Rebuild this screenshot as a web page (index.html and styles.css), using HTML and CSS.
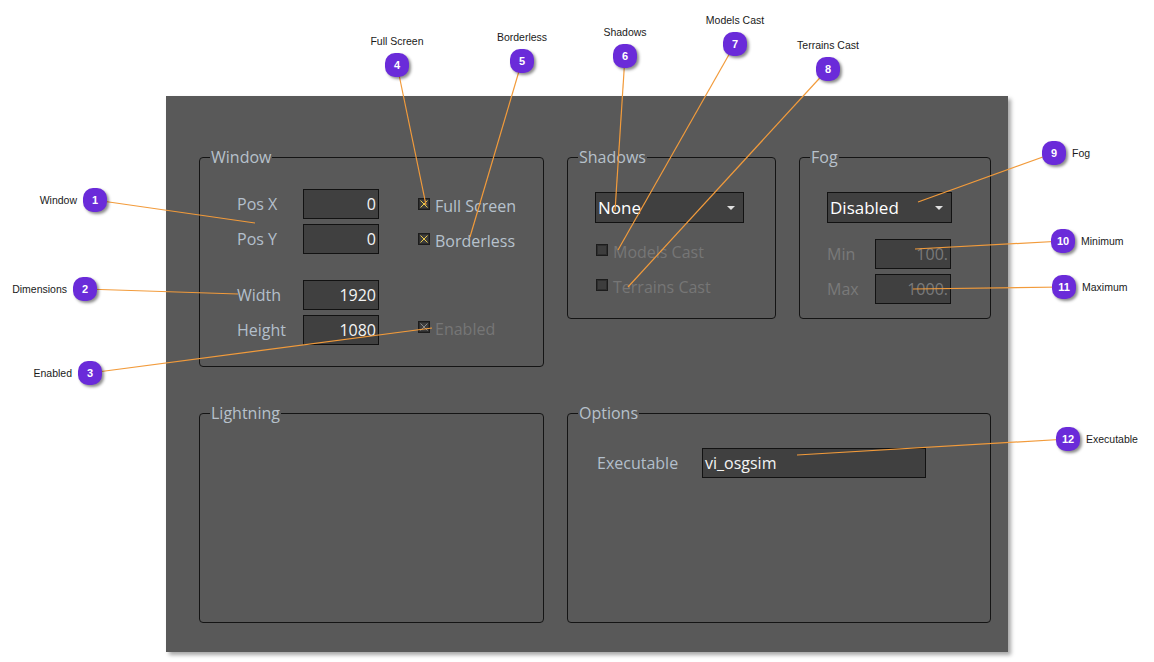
FILE: index.html
```html
<!DOCTYPE html>
<html>
<head>
<meta charset="utf-8">
<link rel="stylesheet" href="styles.css">
</head>
<body>
<div class="page">
  <div class="panel">
    <fieldset class="group g-window">
      <legend>Window</legend>
      <div class="group-body">
        <div class="form-block">
          <span class="lbl">Pos X</span><span class="field num">0</span>
          <label class="check"><span class="cb on"><svg viewBox="0 0 10 10"><path d="M1.5 1.5L8.5 8.5M8.5 1.5L1.5 8.5"/></svg></span>Full Screen</label>
          <span class="lbl">Pos Y</span><span class="field num">0</span>
          <label class="check"><span class="cb on"><svg viewBox="0 0 10 10"><path d="M1.5 1.5L8.5 8.5M8.5 1.5L1.5 8.5"/></svg></span>Borderless</label>
        </div>
        <div class="form-block second">
          <span class="lbl">Width</span><span class="field num">1920</span><span></span>
          <span class="lbl">Height</span><span class="field num">1080</span>
          <label class="check disabled raised"><span class="cb dis"><svg viewBox="0 0 10 10"><path d="M1.5 1.5L8.5 8.5M8.5 1.5L1.5 8.5"/></svg></span>Enabled</label>
        </div>
      </div>
    </fieldset>

    <fieldset class="group g-shadows">
      <legend>Shadows</legend>
      <div class="group-body">
        <div class="combo w-shadows"><span>None</span><i class="arrow"></i></div>
        <div class="checks">
          <label class="check disabled"><span class="cb"></span>Models Cast</label>
          <label class="check disabled"><span class="cb"></span>Terrains Cast</label>
        </div>
      </div>
    </fieldset>

    <fieldset class="group g-fog">
      <legend>Fog</legend>
      <div class="group-body">
        <div class="combo w-fog"><span>Disabled</span><i class="arrow"></i></div>
        <div class="fog-form">
          <span class="lbl disabled">Min</span><span class="field num disabled">100.</span>
          <span class="lbl disabled">Max</span><span class="field num disabled">1000.</span>
        </div>
      </div>
    </fieldset>

    <fieldset class="group g-light">
      <legend>Lightning</legend>
    </fieldset>

    <fieldset class="group g-options">
      <legend>Options</legend>
      <div class="group-body">
        <div class="opt-form">
          <span class="lbl">Executable</span><span class="field text">vi_osgsim</span>
        </div>
      </div>
    </fieldset>
  </div>

  <svg class="leaders" width="1154" height="662" viewBox="0 0 1154 662">
    <line x1="95" y1="200" x2="255" y2="223"/>
    <line x1="85" y1="289" x2="238" y2="294"/>
    <line x1="90" y1="373" x2="432" y2="328"/>
    <line x1="397" y1="65" x2="426" y2="205"/>
    <line x1="522" y1="61" x2="470" y2="237"/>
    <line x1="625" y1="56" x2="615" y2="211"/>
    <line x1="735" y1="44" x2="618" y2="250"/>
    <line x1="828" y1="69" x2="628" y2="287"/>
    <line x1="1054" y1="153" x2="918" y2="202"/>
    <line x1="1063" y1="241" x2="915" y2="249"/>
    <line x1="1064" y1="287" x2="913" y2="289"/>
    <line x1="1068" y1="439" x2="797" y2="455"/>
  </svg>

  <div class="ann left a1"><span class="ann-text">Window</span><span class="badge">1</span></div>
  <div class="ann left a2"><span class="ann-text">Dimensions</span><span class="badge">2</span></div>
  <div class="ann left a3"><span class="ann-text">Enabled</span><span class="badge">3</span></div>

  <div class="ann top a4"><span class="ann-text">Full Screen</span><span class="badge">4</span></div>
  <div class="ann top a5"><span class="ann-text">Borderless</span><span class="badge">5</span></div>
  <div class="ann top a6"><span class="ann-text">Shadows</span><span class="badge">6</span></div>
  <div class="ann top a7"><span class="ann-text">Models Cast</span><span class="badge">7</span></div>
  <div class="ann top a8"><span class="ann-text">Terrains Cast</span><span class="badge">8</span></div>

  <div class="ann right a9"><span class="badge">9</span><span class="ann-text">Fog</span></div>
  <div class="ann right a10"><span class="badge">10</span><span class="ann-text">Minimum</span></div>
  <div class="ann right a11"><span class="badge">11</span><span class="ann-text">Maximum</span></div>
  <div class="ann right a12"><span class="badge">12</span><span class="ann-text">Executable</span></div>
</div>
</body>
</html>
```
FILE: styles.css
```css
html, body {
  margin: 0;
  padding: 0;
  background: #ffffff;
}

.page {
  position: relative;
  width: 1154px;
  height: 662px;
  overflow: hidden;
  box-sizing: border-box;
  padding: 96px 0 0 166px;
  font-family: "Open Sans", "Noto Sans", sans-serif;
}

.panel {
  width: 842px;
  height: 556px;
  box-sizing: border-box;
  background: #595959;
  box-shadow: 3px 3px 4px rgba(0, 0, 0, 0.35);
  padding: 53px 0 0 33px;
  display: grid;
  grid-template-columns: 345px 209px 192px;
  grid-template-rows: 218px 218px;
  column-gap: 23px;
  row-gap: 38px;
}

.group {
  margin: 0;
  padding: 0;
  min-width: 0;
  border: 1px solid #141414;
  border-radius: 4px;
  box-sizing: border-box;
  color: #b3bfcb;
  font-size: 16px;
}

.group legend {
  margin-left: 10px;
  padding: 0 1px;
  line-height: 16px;
  height: 16px;
  color: #b7c1cb;
  font-size: 16px;
}

.g-window { grid-column: 1; grid-row: 1; }
.g-shadows { grid-column: 2; grid-row: 1; align-self: start; height: 170px; }
.g-fog { grid-column: 3; grid-row: 1; align-self: start; height: 170px; }
.g-light { grid-column: 1; grid-row: 2; }
.g-options { grid-column: 2 / span 2; grid-row: 2; }

.g-window .group-body { padding: 24px 0 0 37px; }
.g-shadows .group-body { padding: 27px 0 0 27px; }
.g-fog .group-body { padding: 27px 0 0 27px; }
.g-options .group-body { padding: 27px 0 0 29px; }

.lbl {
  display: flex;
  align-items: center;
  height: 30px;
  color: #b3bfcb;
  line-height: 20px;
}

.field {
  display: flex;
  align-items: center;
  height: 30px;
  box-sizing: border-box;
  background: #404040;
  border: 1px solid #121212;
  color: #f4f4f4;
  line-height: 20px;
}

.field.num {
  justify-content: flex-end;
  padding-right: 2px;
}

.field.text {
  padding-left: 2px;
}

.disabled,
.lbl.disabled,
.field.disabled {
  color: #7a7a7a;
}

.form-block {
  display: grid;
  grid-template-columns: 66px 76px auto;
  grid-auto-rows: 30px;
  row-gap: 5px;
}

.form-block.second {
  margin-top: 26px;
}

.check {
  display: flex;
  align-items: center;
  padding-left: 39px;
  gap: 5px;
  color: #b7c2cd;
  line-height: 20px;
  padding-top: 3px;
  box-sizing: border-box;
}

.check.raised {
  padding-top: 0;
  margin-top: -3px;
}

.check.disabled {
  color: #767676;
}

.cb {
  width: 12px;
  height: 12px;
  box-sizing: border-box;
  border: 1px solid #1c1c1c;
  background: #3d3d3d;
  box-shadow: inset 0 0 0 1px #2e2e2e;
  display: flex;
  align-items: center;
  justify-content: center;
  margin-top: -4px;
  flex: none;
}

.cb svg {
  width: 10px;
  height: 10px;
  fill: none;
  stroke-width: 1;
}

.cb.on svg { stroke: #e9c94a; }
.cb.dis svg { stroke: #8a8a8a; }

.combo {
  display: flex;
  align-items: center;
  justify-content: space-between;
  height: 31px;
  box-sizing: border-box;
  background: #404040;
  border: 1px solid #121212;
  color: #ffffff;
  padding: 0 8px 1px 2px;
  font-size: 17px;
}

.w-shadows { width: 149px; }
.w-fog { width: 125px; }

.arrow {
  width: 0;
  height: 0;
  border-left: 4px solid transparent;
  border-right: 4px solid transparent;
  border-top: 4px solid #e0e0e0;
  margin-top: 2px;
}

.checks {
  margin-top: 12px;
  display: flex;
  flex-direction: column;
  gap: 5px;
}

.checks .check {
  padding-left: 1px;
  height: 30px;
}

.fog-form {
  margin-top: 16px;
  display: grid;
  grid-template-columns: 48px 76px;
  grid-auto-rows: 30px;
  row-gap: 5px;
}

.opt-form {
  display: grid;
  grid-template-columns: 105px 224px;
  grid-auto-rows: 31px;
}

/* annotations */
.leaders {
  position: absolute;
  left: 0;
  top: 0;
  pointer-events: none;
}

.leaders line {
  stroke: #f29b3b;
  stroke-width: 1.2;
}

.ann {
  position: absolute;
  display: flex;
  align-items: center;
  gap: 6px;
  font-family: "Liberation Sans", Arial, sans-serif;
  font-size: 10.5px;
  color: #1a1a1a;
}

.ann.top {
  flex-direction: column;
  width: 100px;
  gap: 5px;
}

.ann-text {
  line-height: 13px;
  white-space: nowrap;
}

.badge {
  width: 24px;
  height: 24px;
  border-radius: 10px;
  background: #6a2bd9;
  color: #ffffff;
  font-weight: bold;
  font-size: 11px;
  display: flex;
  align-items: center;
  justify-content: center;
  box-shadow: 2px 2px 3px rgba(0, 0, 0, 0.45);
  flex: none;
}

.a1 { right: 1047px; top: 188px; }
.a2 { right: 1057px; top: 277px; }
.a3 { right: 1052px; top: 361px; }

.a4 { left: 347px; top: 35px; }
.a5 { left: 472px; top: 31px; }
.a6 { left: 575px; top: 26px; }
.a7 { left: 685px; top: 14px; }
.a8 { left: 778px; top: 39px; }

.a9 { left: 1042px; top: 141px; }
.a10 { left: 1051px; top: 229px; }
.a11 { left: 1052px; top: 275px; }
.a12 { left: 1056px; top: 427px; }
```
